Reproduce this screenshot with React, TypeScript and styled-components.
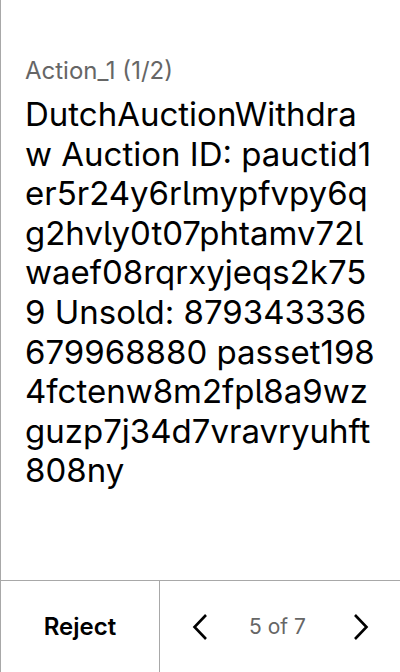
import React from "react";
import styled, { createGlobalStyle } from "styled-components";

const Global = createGlobalStyle`
  html, body { margin: 0; padding: 0; background: #fff; }
  body {
    font-family: Inter, "Noto Sans", sans-serif;
    font-feature-settings: "cv05" 1;
  }
  * { box-sizing: border-box; }
`;

const Screen = styled.div`
  width: 400px;
  height: 672px;
  display: flex;
  flex-direction: column;
  border-left: 1px solid #a8a8a8;
  background: #fff;
`;

const Content = styled.div`
  flex: 1;
  padding: 56px 24px 0 24px;
  display: flex;
  flex-direction: column;
  gap: 10px;
`;

const Label = styled.div`
  font-size: 24px;
  line-height: 29px;
  color: #666;
`;

const Message = styled.div`
  font-size: 33px;
  line-height: 39.6px;
  color: #000;
  word-break: break-all;
`;

const Footer = styled.div`
  height: 92px;
  border-top: 1px solid #a8a8a8;
  display: grid;
  grid-template-columns: 159px 1fr;
`;

const RejectButton = styled.div`
  display: flex;
  align-items: center;
  justify-content: center;
  font-size: 24px;
  font-weight: 600;
  color: #000;
  border-right: 1px solid #a8a8a8;
`;

const Pager = styled.div`
  display: flex;
  align-items: center;
  justify-content: space-between;
  padding: 0 31px 0 32px;
`;

const PageText = styled.div`
  font-size: 21px;
  color: #666;
  margin-right: 6px;
`;

const Chevron = ({ dir }: { dir: "left" | "right" }) => (
  <svg width="16" height="28" viewBox="0 0 16 28">
    {dir === "left" ? (
      <path d="M14 2 L2.5 14 L14 26" fill="none" stroke="#000" strokeWidth="2.6" />
    ) : (
      <path d="M2 2 L13.5 14 L2 26" fill="none" stroke="#000" strokeWidth="2.6" />
    )}
  </svg>
);

export default function App() {
  return (
    <>
      <Global />
      <Screen>
        <Content>
          <Label>Action_1 (1/2)</Label>
          <Message>
            DutchAuctionWithdraw Auction ID: pauctid1er5r24y6rlmypfvpy6qg2hvly0t07phtamv72lwaef08rqrxyjeqs2k759 Unsold: 879343336679968880 passet1984fctenw8m2fpl8a9wzguzp7j34d7vravryuhft808ny
          </Message>
        </Content>
        <Footer>
          <RejectButton>Reject</RejectButton>
          <Pager>
            <Chevron dir="left" />
            <PageText>5 of 7</PageText>
            <Chevron dir="right" />
          </Pager>
        </Footer>
      </Screen>
    </>
  );
}
